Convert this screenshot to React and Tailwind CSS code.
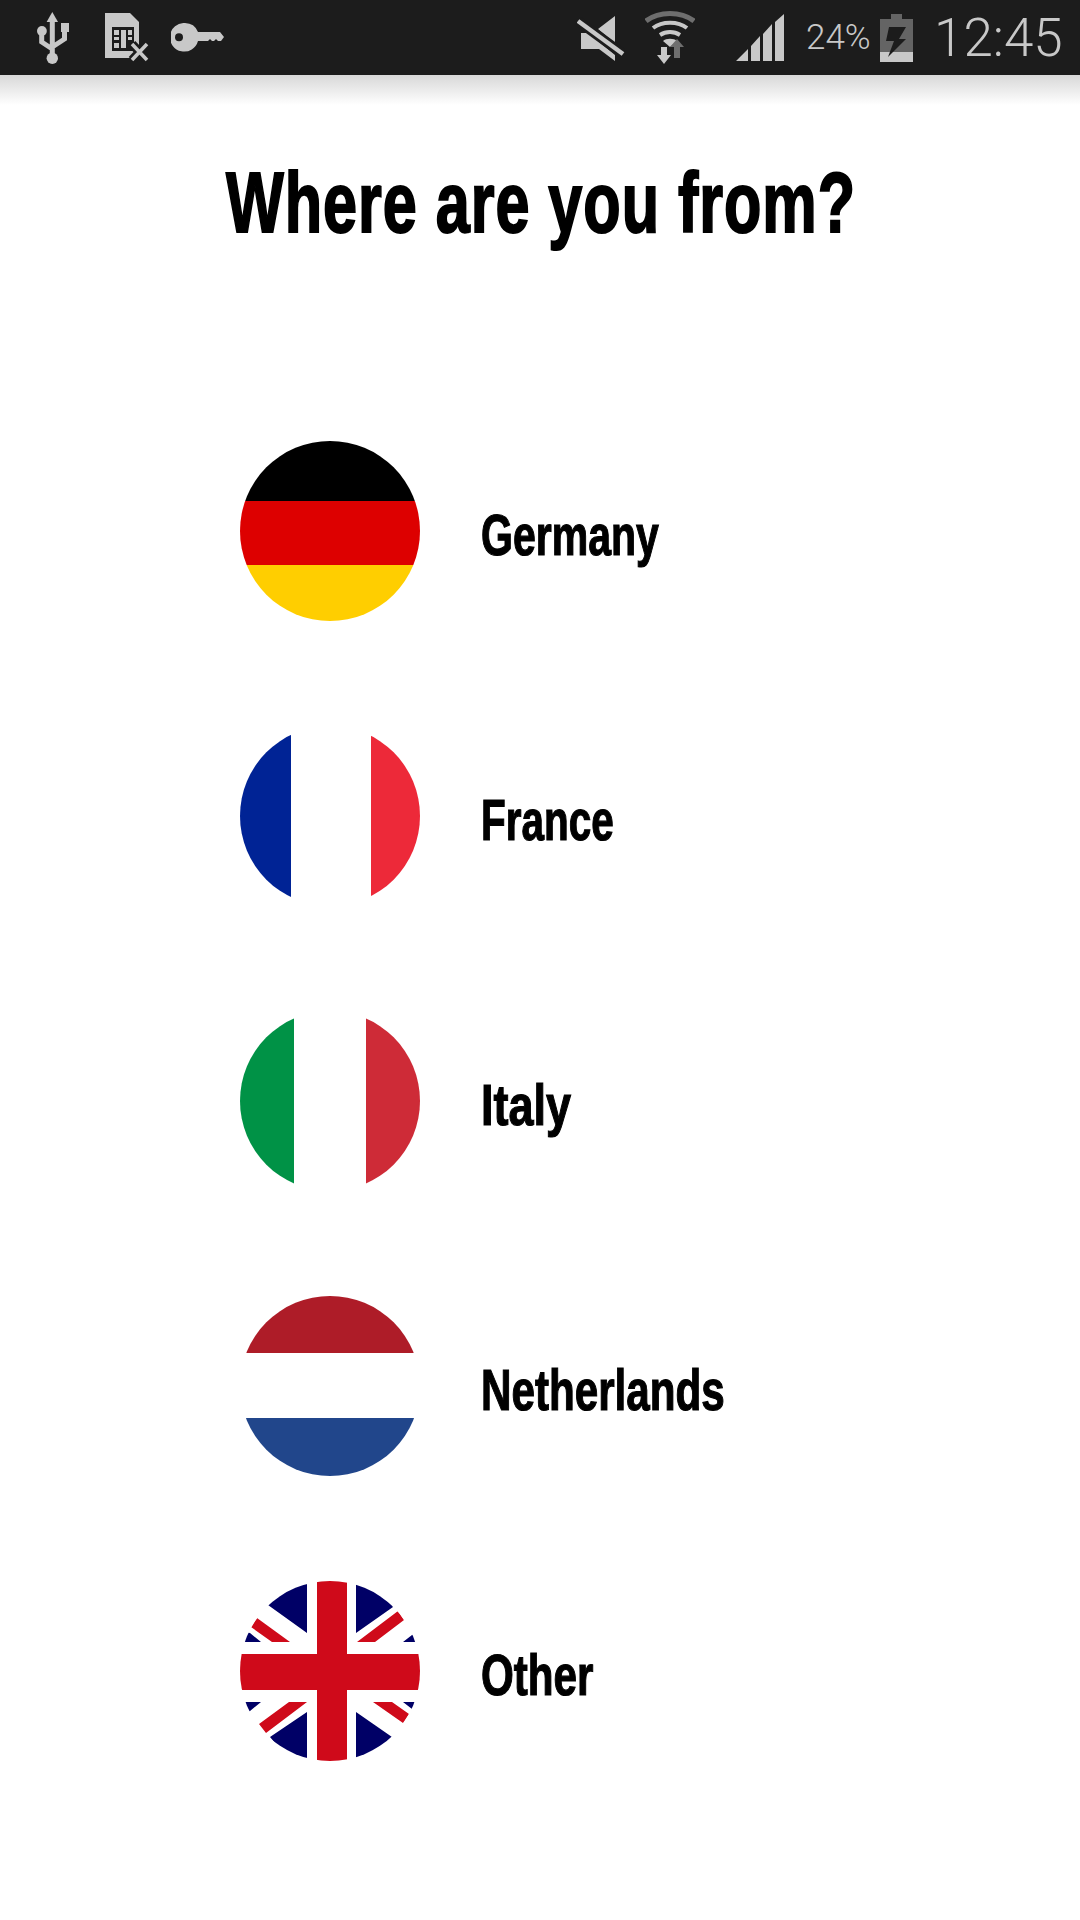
const FONT = "font-['Liberation_Sans',sans-serif]";

function UsbIcon() {
  return (
    <svg width="32" height="52" viewBox="0 0 32 52" className="shrink-0">
      <path d="M15.300 0L21 10H9.600z" fill="#c8c8c8" />
      <path d="M15.300 8V44M4.700 22V30L15.300 37M27.500 18V27L15.300 35" stroke="#c8c8c8" strokeWidth="5" fill="none" />
      <rect x="24" y="11" width="8" height="9" fill="#c8c8c8" />
      <circle cx="4.900" cy="19" r="4.900" fill="#c8c8c8" />
      <circle cx="15.300" cy="46.300" r="5.700" fill="#c8c8c8" />
    </svg>
  );
}

function SimIcon() {
  return (
    <svg width="44" height="49" viewBox="0 0 44 49" className="shrink-0 ml-[36px]">
      <path d="M0 0h25l9 9v36H0z" fill="#c8c8c8" />
      <path d="M7 14h22v24H7z" fill="#1c1c1c" />
      <path d="M9 17h5v5H9zM9 24h5v3H9zM9 30h5v5H9zM16 17h5v18h-5zM23 17h4v5h-4zM23 24h4v3h-4z" fill="#c8c8c8" />
      <path d="M27 31l15 16M42 31L27 47" stroke="#1c1c1c" strokeWidth="9" />
      <path d="M27 31l15 16M42 31L27 47" stroke="#c8c8c8" strokeWidth="3.500" />
    </svg>
  );
}

function KeyIcon() {
  return (
    <svg width="54" height="29" viewBox="0 0 54 29" className="shrink-0 ml-[22px]">
      <path d="M14 0a14.300 14.300 0 0 1 13 9h22l4 5-3 4h-3l-2-2-2 2h-2l-2-2-2 2H27a14.300 14.300 0 1 1-13-18z" fill="#c8c8c8" />
      <circle cx="8" cy="14.300" r="4" fill="#1c1c1c" />
    </svg>
  );
}

function MuteIcon() {
  return (
    <svg width="48" height="47" viewBox="0 0 48 47" className="shrink-0">
      <path d="M21 15L38 2v27zM4 19h7l27 22v6L22 35H4z" fill="#c8c8c8" />
      <path d="M1 7l45 33" stroke="#1c1c1c" strokeWidth="10" />
      <path d="M1 7l45 33" stroke="#c8c8c8" strokeWidth="4.500" />
    </svg>
  );
}

function WifiIcon() {
  return (
    <svg width="50" height="53" viewBox="0 0 50 53" fill="none" className="shrink-0 ml-[20px]">
      <path d="M1 10C14 0 36 0 49 10" stroke="#6e6e6e" strokeWidth="5" />
      <path d="M8 17c9-7 25-7 34 0" stroke="#c8c8c8" strokeWidth="4" />
      <path d="M15 24c6-4 14-4 20 0" stroke="#c8c8c8" strokeWidth="4" />
      <path d="M18 30c3-3 11-3 14 0l-7 6z" fill="#c8c8c8" />
      <path d="M16 36h6v8h4l-7 9-7-9h4z" fill="#c8c8c8" />
      <path d="M29 47V36h-4l7-8 7 8h-4v11z" fill="#6e6e6e" />
    </svg>
  );
}

function SignalIcon() {
  return (
    <svg width="48" height="47" viewBox="0 0 48 47" fill="#c8c8c8" className="shrink-0 ml-[41px]">
      <path d="M0 47L12 35v12zM15 32l9-10v25h-9zM27 20l9-10v37h-9zM39 8l9-8v47h-9z" />
    </svg>
  );
}

function BatteryIcon() {
  return (
    <svg width="33" height="48" viewBox="0 0 33 48" className="shrink-0 ml-[9px]">
      <path d="M11 0h11v5h11v33H0V5h11z" fill="#646464" />
      <path d="M0 38h33v10H0z" fill="#c8c8c8" />
      <path d="M9 13h17l-7 12h7L8 43l6-16H6z" fill="#1c1c1c" />
    </svg>
  );
}

function StatusBar() {
  return (
    <div className="flex h-[75px] items-center bg-[#1c1c1c] pl-[37px] font-['Roboto',sans-serif] font-light text-[#c8c8c8]">
      <UsbIcon />
      <SimIcon />
      <KeyIcon />
      <div className="ml-[352px] flex items-center">
        <MuteIcon />
        <WifiIcon />
        <SignalIcon />
        <span className="ml-[22px] w-[65px] whitespace-nowrap text-[35px] leading-[40px]">24%</span>
        <BatteryIcon />
        <span className="ml-[21px] whitespace-nowrap text-[53px] leading-[56px]">12:45</span>
      </div>
    </div>
  );
}

function Germany() {
  return (
    <div className="h-[180px] w-[180px] shrink-0 overflow-hidden rounded-full">
      <div className="h-[60px] bg-black" />
      <div className="h-[64px] bg-[#dd0000]" />
      <div className="h-[56px] bg-[#ffce00]" />
    </div>
  );
}

function France() {
  return (
    <div className="flex h-[180px] w-[180px] shrink-0 overflow-hidden rounded-full">
      <div className="w-[51px] bg-[#002395]" />
      <div className="w-[80px] bg-white" />
      <div className="w-[49px] bg-[#ed2939]" />
    </div>
  );
}

function Italy() {
  return (
    <div className="flex h-[180px] w-[180px] shrink-0 overflow-hidden rounded-full">
      <div className="w-[54px] bg-[#009246]" />
      <div className="w-[72px] bg-white" />
      <div className="w-[54px] bg-[#ce2b37]" />
    </div>
  );
}

function Netherlands() {
  return (
    <div className="h-[180px] w-[180px] shrink-0 overflow-hidden rounded-full">
      <div className="h-[57px] bg-[#ae1c28]" />
      <div className="h-[65px] bg-white" />
      <div className="h-[58px] bg-[#21468b]" />
    </div>
  );
}

function UnionJack() {
  return (
    <svg width="180" height="180" viewBox="0 0 180 180" className="shrink-0 rounded-full">
      <rect width="180" height="180" fill="#fff" />
      <path
        d="M67 0V52L28 24L40 0zM116 0V52L153 26L140 0zM0 61H21L10 52L0 50zM163 61H180V50L172 54zM0 121H21L10 130L0 135zM163 121H180V135L172 128zM67 131V180H50L30 156zM116 131V180H135L152 156z"
        fill="#000066"
      />
      <path
        d="M17 37L11 46L32 61H50zM158 30L164 39L135 61H117zM67 121H49L19 143L26 152zM133 121H152L169 133L163 142z"
        fill="#cf0a1a"
      />
      <rect x="77" y="0" width="30" height="180" fill="#cf0a1a" />
      <rect x="0" y="73" width="180" height="36" fill="#cf0a1a" />
    </svg>
  );
}

// no Oswald here, so bold Liberation squeezed per label to the reference widths
const countries = [
  { name: "Germany", Flag: Germany, squeeze: "scale-x-[0.72]" },
  { name: "France", Flag: France, squeeze: "scale-x-[0.71]" },
  { name: "Italy", Flag: Italy, squeeze: "scale-x-[0.79]" },
  { name: "Netherlands", Flag: Netherlands, squeeze: "scale-x-[0.74]" },
  { name: "Other", Flag: UnionJack, squeeze: "scale-x-[0.74]" },
];

export default function App() {
  return (
    <div className={`h-[1920px] w-[1080px] overflow-hidden bg-white text-black ${FONT}`}>
      <StatusBar />
      <div className="h-[30px] bg-gradient-to-b from-[#d8d8d8] to-white" />
      <div className="mt-[43px] flex h-[110px] justify-center">
        <h1 className="origin-center scale-x-[0.72] whitespace-nowrap pl-[3px] text-[85px] font-bold leading-[110px] tracking-[1.300px] [-webkit-text-stroke:2px_black]">
          Where are you from?
        </h1>
      </div>
      <div className="mt-[183px] flex flex-col gap-[105px] pl-[240px]">
        {countries.map(({ name, Flag, squeeze }) => (
          <div key={name} className="flex h-[180px] items-center gap-[61px]">
            <Flag />
            <span className={`origin-left whitespace-nowrap pt-[8px] text-[57px] font-bold leading-[60px] [-webkit-text-stroke:1.2px_black] ${squeeze}`}>
              {name}
            </span>
          </div>
        ))}
      </div>
    </div>
  );
}
